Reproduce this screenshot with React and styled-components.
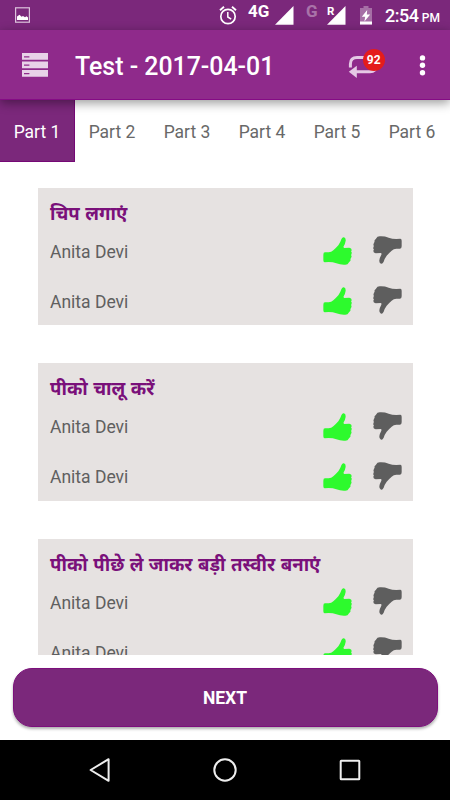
import React, { useState } from "react"
import styled, { createGlobalStyle } from "styled-components"

const GlobalStyle = createGlobalStyle`
  * {
    box-sizing: border-box;
  }
  body {
    margin: 0;
    overflow: hidden;
    font-family: Roboto, "Noto Sans", sans-serif;
  }
  button {
    font-family: inherit;
    border: 0;
    padding: 0;
    background: none;
    cursor: pointer;
  }
  svg {
    display: block;
    flex: none;
  }
`
const Screen = styled.div`
  width: 450px;
  height: 800px;
  display: flex;
  flex-direction: column;
  background-color: #fff;
`
const StatusBar = styled.div`
  height: 30px;
  flex: none;
  display: flex;
  justify-content: space-between;
  padding: 0 10px 0 15px;
  background-color: #7b287b;
  color: #fff;
`
const Notification = styled.div`
  padding-top: 7px;
`
const StatusItems = styled.div`
  display: flex;
  align-items: flex-start;
  padding-top: 6px;
`
const Network = styled.span`
  width: ${props => props.width};
  margin-left: ${props => props.gap};
  margin-top: -3px;
  font-size: 17px;
  line-height: 17px;
  font-weight: 700;
  opacity: ${props => (props.$faded ? 0.35 : 1)};
`
const Signal = styled.div`
  position: relative;
  margin-left: ${props => props.gap || "0"};
`
const Roaming = styled.span`
  position: absolute;
  left: 0;
  top: 0;
  font-size: 11.5px;
  line-height: 11px;
  font-weight: 700;
`
const Battery = styled.div`
  margin: 0 13px 0 14px;
`
const Clock = styled.div`
  display: flex;
  align-items: baseline;
  width: 55px;
  justify-content: space-between;
  font-size: 18px;
  line-height: 20px;
  font-weight: 500;
  letter-spacing: -0.5px;
  small {
    font-size: 12px;
    letter-spacing: 0;
  }
`
const Toolbar = styled.header`
  height: 70px;
  flex: none;
  display: flex;
  align-items: center;
  padding: 0 24px 0 22px;
  position: relative;
  z-index: 1;
  background-color: #8f2a8b;
  border-bottom: 1px solid #850b85;
  box-shadow: 0 3px 10px rgba(0, 0, 0, 0.4);
  color: #fff;
`
const Title = styled.h1`
  flex: 1;
  margin: 4px 0 0 27px;
  font-size: 24.9px;
  line-height: 30px;
  font-weight: 500;
  white-space: nowrap;
`
const Sync = styled.button`
  position: relative;
  width: 36px;
  height: 30px;
  margin-right: 35px;
`
const Badge = styled.span`
  position: absolute;
  left: 14.5px;
  top: -1px;
  width: 22.5px;
  height: 22.5px;
  border-radius: 50%;
  background-color: #e41c1c;
  color: #fff;
  font-size: 12px;
  line-height: 22px;
  font-weight: 700;
  text-align: center;
`
const Tabs = styled.nav`
  height: 62px;
  flex: none;
  display: flex;
`
const Tab = styled.button`
  width: 75px;
  height: 62px;
  padding: 2px 1px 0 0;
  font-size: 17.5px;
  color: ${props => (props.$active ? "#fff" : "#686868")};
  background-color: ${props => (props.$active ? "#7b287b" : "transparent")};
  box-shadow: ${props => (props.$active ? "inset -1px -1px 0 #750875" : "none")};
`
const List = styled.main`
  height: 493px;
  flex: none;
  overflow: hidden;
  display: flex;
  flex-direction: column;
  gap: 38px;
  padding: 25.6px 37.5px 0;
`
const Card = styled.section`
  height: 137.7px;
  flex: none;
  padding: 12px 11px 0 12.5px;
  background-color: #e6e2e1;
`
const CardTitle = styled.h2`
  height: 26px;
  margin: 0 0 1px;
  font-family: "Noto Sans", "Noto Sans Devanagari", sans-serif;
  font-size: 18.6px;
  line-height: 26px;
  font-weight: 700;
  word-spacing: 0.6px;
  color: #7a107a;
  white-space: nowrap;
`
const Row = styled.div`
  height: 50px;
  display: flex;
  align-items: center;
`
const Name = styled.span`
  flex: 1;
  font-size: 17.5px;
  color: #5f5f5f;
`
const Vote = styled.button`
  width: 29px;
  height: 28px;
  margin-left: ${props => (props.$down ? "21px" : "0")};
  margin-top: ${props => (props.$down ? "-3px" : "-1px")};
  color: ${props => (props.$down ? "#5e5e5e" : "#2dfa2d")};
  transform: ${props => (props.$down ? "rotate(180deg)" : "none")};
`
const Footer = styled.footer`
  height: 85px;
  flex: none;
  padding: 12.5px 12.5px 0;
`
const NextButton = styled.button`
  display: block;
  width: 100%;
  height: 59.5px;
  padding-top: 2px;
  border: 1px solid #7c0f7c;
  border-radius: 19px;
  background-color: #7b287b;
  box-shadow: 0 2px 3px rgba(0, 0, 0, 0.32);
  color: #fff;
  font-size: 17.5px;
  font-weight: 700;
`
const NavBar = styled.div`
  height: 60px;
  flex: none;
  display: flex;
  justify-content: center;
  align-items: center;
  gap: 101px;
  background-color: #000;
`

const Thumb = () => (
  <svg width="29" height="28" viewBox="0 0 87 84" fill="currentColor">
    <path d="M55 7Q58 0 63 1Q69 3 68 11Q67 19 62 28Q60 32 64 33L79 32Q86 33 86 39Q86 42 84 43Q87 46 86 49Q86 52 84 54Q87 57 85 61Q84 65 82 66Q84 70 81 73Q78 75 77 77Q75 83 67 83Q53 84 40 79Q30 75 17 75L5 76Q1 76 1 70L1 53Q1 46 6 46L17 46Q25 46 31 40Q38 34 46 25Q52 17 55 7Z" />
  </svg>
)

const Triangle = () => (
  <svg width="19" height="19" viewBox="0 0 19 19">
    <path d="M18.5 0V18.7H0Z" fill="#fff" />
  </svg>
)

const cards = [
  { title: "चिप लगाएं", people: ["Anita Devi", "Anita Devi"] },
  { title: "पीको चालू करें", people: ["Anita Devi", "Anita Devi"] },
  { title: "पीको पीछे ले जाकर बड़ी तस्वीर बनाएं", people: ["Anita Devi", "Anita Devi"] },
]

const App = () => {
  const [part, setPart] = useState(1)
  return (
    <Screen>
      <GlobalStyle />
      <StatusBar>
        <Notification>
          <svg width="15" height="16" viewBox="0 0 15 16">
            <rect x=".6" y=".8" width="13.8" height="14.4" fill="none" stroke="#dcc3dc" strokeWidth="1.2" />
            <path d="M2 13V9.5L4.5 7.8L6.5 9.8L8 9L10 10.3L11.5 9.3L13 10.5V13Z" fill="#fff" />
          </svg>
        </Notification>
        <StatusItems>
          <svg width="18" height="19" viewBox="0 0 18 19" fill="none" stroke="#fff">
            <circle cx="9" cy="10.5" r="7.2" strokeWidth="1.7" />
            <path d="M1 4.2L5 .8M17 4.2L13 .8" strokeWidth="1.9" />
            <path d="M8.8 6V11L12.2 13.2" strokeWidth="1.5" />
          </svg>
          <Network width="22px" gap="11px">4G</Network>
          <Signal gap="5px"><Triangle /></Signal>
          <Network width="12px" gap="12px" $faded>G</Network>
          <Signal gap="9px">
            <Triangle />
            <Roaming>R</Roaming>
          </Signal>
          <Battery>
            <svg width="12" height="19" viewBox="0 0 12 19">
              <path d="M3.5 0H8.5V2H12V18.5H0V2H3.5Z" fill="#a66fa6" />
              <path d="M0 15.5H12V18.5H0Z" fill="#fff" />
              <path d="M7.2 4L1.8 10.7H5.2L4.4 15.5L10.2 8.4H6.8Z" fill="#fff" />
            </svg>
          </Battery>
          <Clock>2:54<small>PM</small></Clock>
        </StatusItems>
      </StatusBar>
      <Toolbar>
        <svg width="26" height="24" viewBox="0 0 26 24">
          <path d="M0 0H26V6.7H0ZM0 8.6H26V15.3H0ZM0 17.1H26V23.8H0Z" fill="#e8d2e8" />
          <path d="M2 3.8H7.4M2 12.2H7.4M2 20.6H7.4" stroke="#8f2a8b" strokeWidth="1.2" />
        </svg>
        <Title>Test - 2017-04-01</Title>
        <Sync>
          <svg width="30" height="30" viewBox="0 0 30 30">
            <path d="M2.4 17.5V14Q2.4 7.6 9 7.6H20M28 12V16Q28 21.8 22 21.8H8" fill="none" stroke="#e5c9e5" strokeWidth="3" />
            <path d="M.8 21.8L8.8 15.8V28Z" fill="#e5c9e5" />
          </svg>
          <Badge>92</Badge>
        </Sync>
        <svg width="7" height="22" viewBox="0 0 7 22" fill="#fff">
          <circle cx="3.5" cy="3.9" r="2.7" />
          <circle cx="3.5" cy="11.3" r="2.7" />
          <circle cx="3.5" cy="18.7" r="2.7" />
        </svg>
      </Toolbar>
      <Tabs>
        {[1, 2, 3, 4, 5, 6].map(n => (
          <Tab key={n} $active={part === n} onClick={() => setPart(n)}>Part {n}</Tab>
        ))}
      </Tabs>
      <List>
        {cards.map(card => (
          <Card key={card.title}>
            <CardTitle>{card.title}</CardTitle>
            {card.people.map((name, i) => (
              <Row key={i}>
                <Name>{name}</Name>
                <Vote><Thumb /></Vote>
                <Vote $down><Thumb /></Vote>
              </Row>
            ))}
          </Card>
        ))}
      </List>
      <Footer>
        <NextButton>NEXT</NextButton>
      </Footer>
      <NavBar>
        <svg width="24" height="26" viewBox="0 0 24 26" fill="none" stroke="#eee" strokeWidth="2">
          <path d="M20.6 2.2V23.8L2.6 13Z" strokeLinejoin="round" />
        </svg>
        <svg width="24" height="24" viewBox="0 0 24 24" fill="none" stroke="#eee" strokeWidth="2">
          <circle cx="12" cy="12" r="10.7" />
        </svg>
        <svg width="24" height="24" viewBox="0 0 24 24" fill="none" stroke="#eee" strokeWidth="2">
          <rect x="2.7" y="2.7" width="18.6" height="18.6" rx=".5" />
        </svg>
      </NavBar>
    </Screen>
  )
}

export default App
